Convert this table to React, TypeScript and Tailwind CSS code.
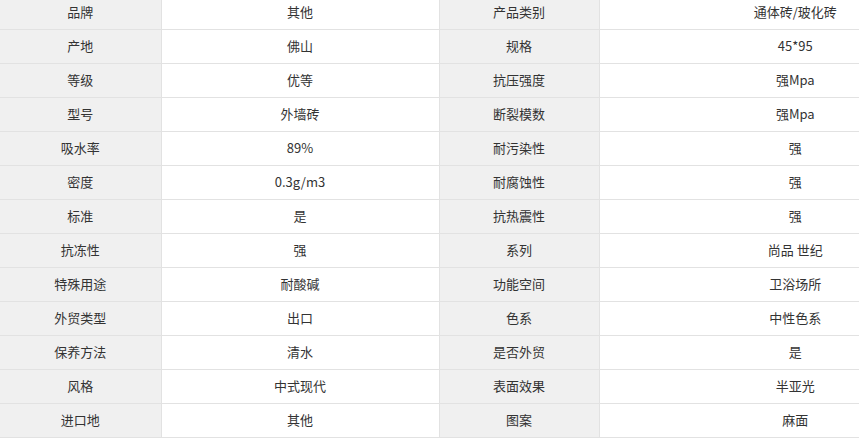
const rows: [string, string, string, string][] = [
  ['品牌', '其他', '产品类别', '通体砖/玻化砖'],
  ['产地', '佛山', '规格', '45*95'],
  ['等级', '优等', '抗压强度', '强Mpa'],
  ['型号', '外墙砖', '断裂模数', '强Mpa'],
  ['吸水率', '89%', '耐污染性', '强'],
  ['密度', '0.3g/m3', '耐腐蚀性', '强'],
  ['标准', '是', '抗热震性', '强'],
  ['抗冻性', '强', '系列', '尚品 世纪'],
  ['特殊用途', '耐酸碱', '功能空间', '卫浴场所'],
  ['外贸类型', '出口', '色系', '中性色系'],
  ['保养方法', '清水', '是否外贸', '是'],
  ['风格', '中式现代', '表面效果', '半亚光'],
  ['进口地', '其他', '图案', '麻面'],
];

export default function App() {
  return (
    <div className="w-[859px] h-[440px] overflow-hidden bg-white">
      <table
        className="-mt-[5px] w-[991px] table-fixed border-collapse text-[13px] text-[#333]"
        style={{ fontFamily: '"Noto Sans CJK SC", "Liberation Sans", sans-serif' }}
      >
        <colgroup>
          <col className="w-[161px]" />
          <col className="w-[278px]" />
          <col className="w-[160px]" />
          <col className="w-[392px]" />
        </colgroup>
        <tbody>
          {rows.map((r, i) => (
            <tr key={i} className="h-[34px] border-b border-[#e2e2e2]">
              <td className="bg-[#f0f0f0] border-r border-[#e2e2e2] text-center align-middle">{r[0]}</td>
              <td className="border-r border-[#e2e2e2] text-center align-middle">{r[1]}</td>
              <td className="bg-[#f0f0f0] border-r border-[#e2e2e2] text-center align-middle">{r[2]}</td>
              <td className="text-center align-middle">{r[3]}</td>
            </tr>
          ))}
        </tbody>
      </table>
    </div>
  );
}
